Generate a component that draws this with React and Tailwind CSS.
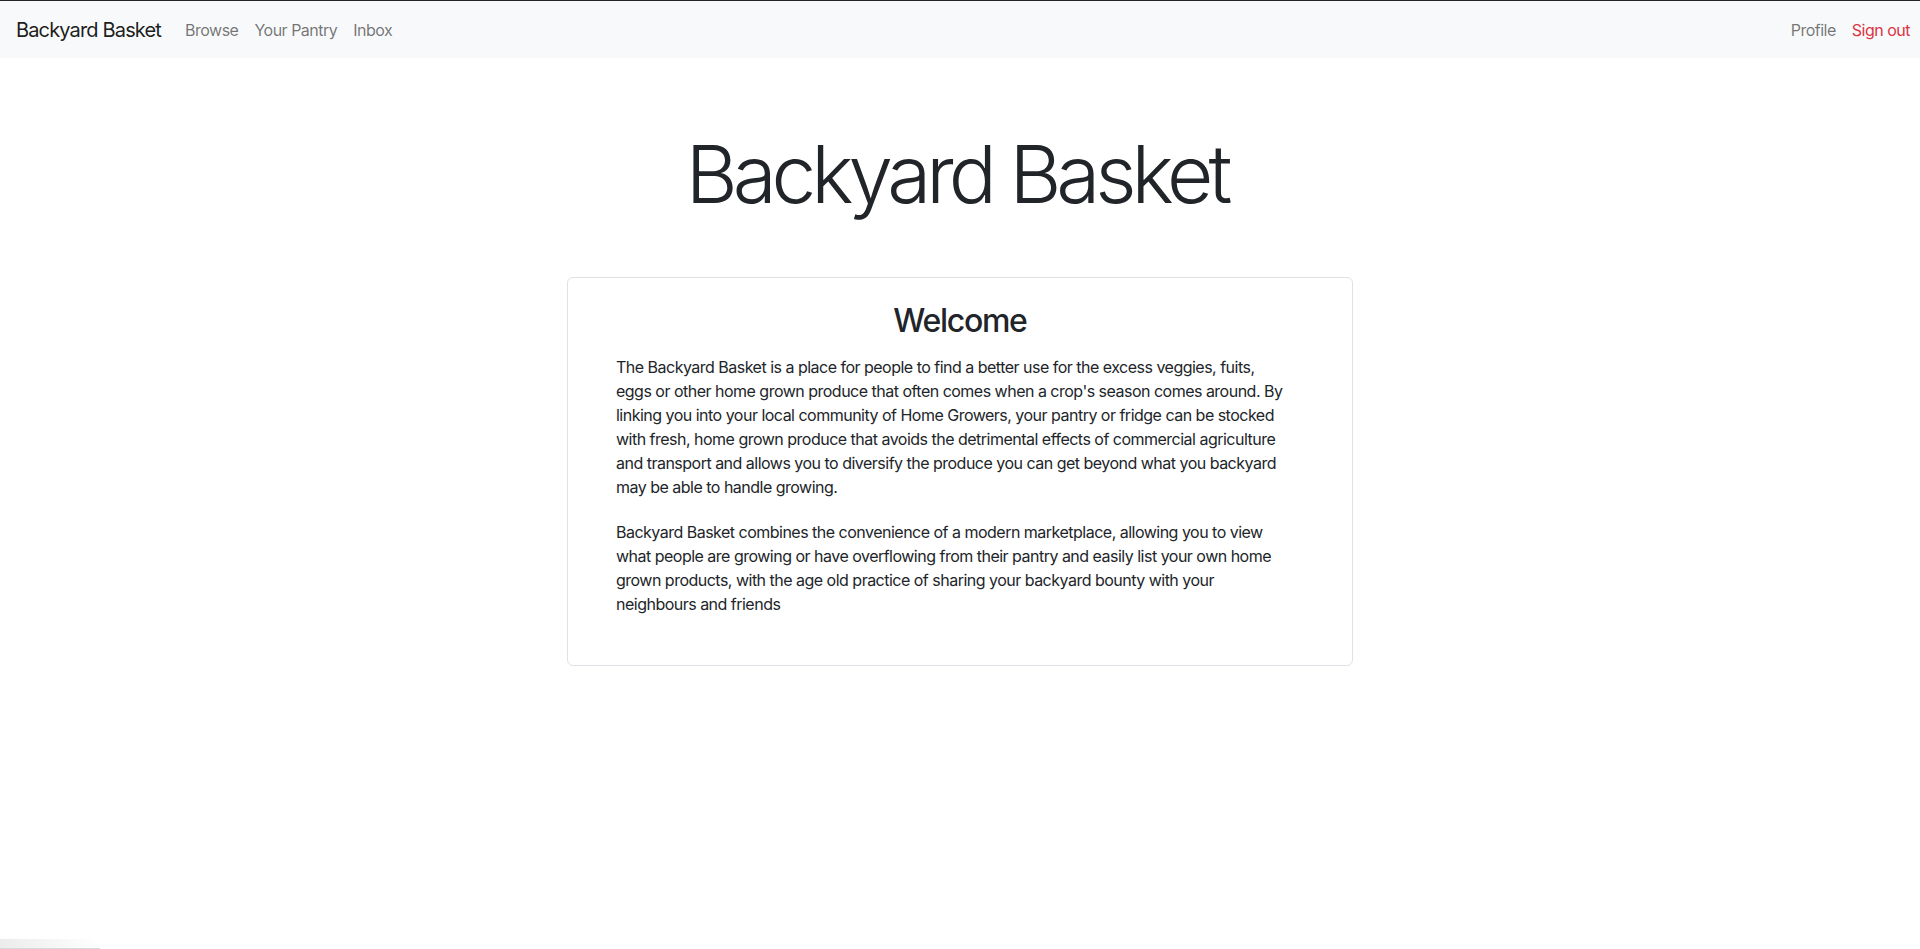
import React from 'react';

const font = { fontFamily: 'Inter, "Liberation Sans", sans-serif' };

function NavBar() {
  return (
    <nav className="h-[58px] bg-[#f8f9fa] border-t border-[#212529] flex items-center justify-between pl-4 pr-[2px]">
      <div className="flex items-center">
        <a className="text-[20px] leading-[30px] text-black/90 mr-4 tracking-[-0.85px]">Backyard Basket</a>
        <a className="px-2 text-[16px] text-black/55 tracking-[-0.5px]">Browse</a>
        <a className="px-2 text-[16px] text-black/55 tracking-[-0.5px]">Your Pantry</a>
        <a className="px-2 text-[16px] text-black/55 tracking-[-0.5px]">Inbox</a>
      </div>
      <div className="flex items-center">
        <a className="px-2 text-[16px] text-black/55 tracking-[-0.5px]">Profile</a>
        <a className="px-2 text-[16px] text-[#dc3545] tracking-[-0.5px]">Sign out</a>
      </div>
    </nav>
  );
}

export default function App() {
  return (
    <div className="min-h-[949px] bg-white text-[#212529]" style={font}>
      <NavBar />
      <main className="flex flex-col items-center">
        <h1 className="mt-[68px] pr-[7px] text-[80px] leading-[96px] font-light tracking-[-5px]">Backyard Basket</h1>
        <section className="mt-[55px] w-[786px] border border-[#dee2e6] rounded-md px-[48px] pt-[24px] pb-[49px]">
          <h2 className="text-center text-[32px] leading-[38px] font-medium tracking-[-1.3px]">Welcome</h2>
          <p className="mt-[15px] text-[16px] leading-[24px] tracking-[-0.51px] whitespace-nowrap">
            The Backyard Basket is a place for people to find a better use for the excess veggies, fuits,<br />
            eggs or other home grown produce that often comes when a crop's season comes around. By<br />
            linking you into your local community of Home Growers, your pantry or fridge can be stocked<br />
            with fresh, home grown produce that avoids the detrimental effects of commercial agriculture<br />
            and transport and allows you to diversify the produce you can get beyond what you backyard<br />
            may be able to handle growing.
          </p>
          <p className="mt-[21px] text-[16px] leading-[24px] tracking-[-0.51px] whitespace-nowrap">
            Backyard Basket combines the convenience of a modern marketplace, allowing you to view<br />
            what people are growing or have overflowing from their pantry and easily list your own home<br />
            grown products, with the age old practice of sharing your backyard bounty with your<br />
            neighbours and friends
          </p>
        </section>
      </main>
      <div className="fixed bottom-0 left-0 w-[100px] h-[10px] bg-gradient-to-r from-[#ececec] to-transparent border-b border-[#d8d8d8]" />
    </div>
  );
}
